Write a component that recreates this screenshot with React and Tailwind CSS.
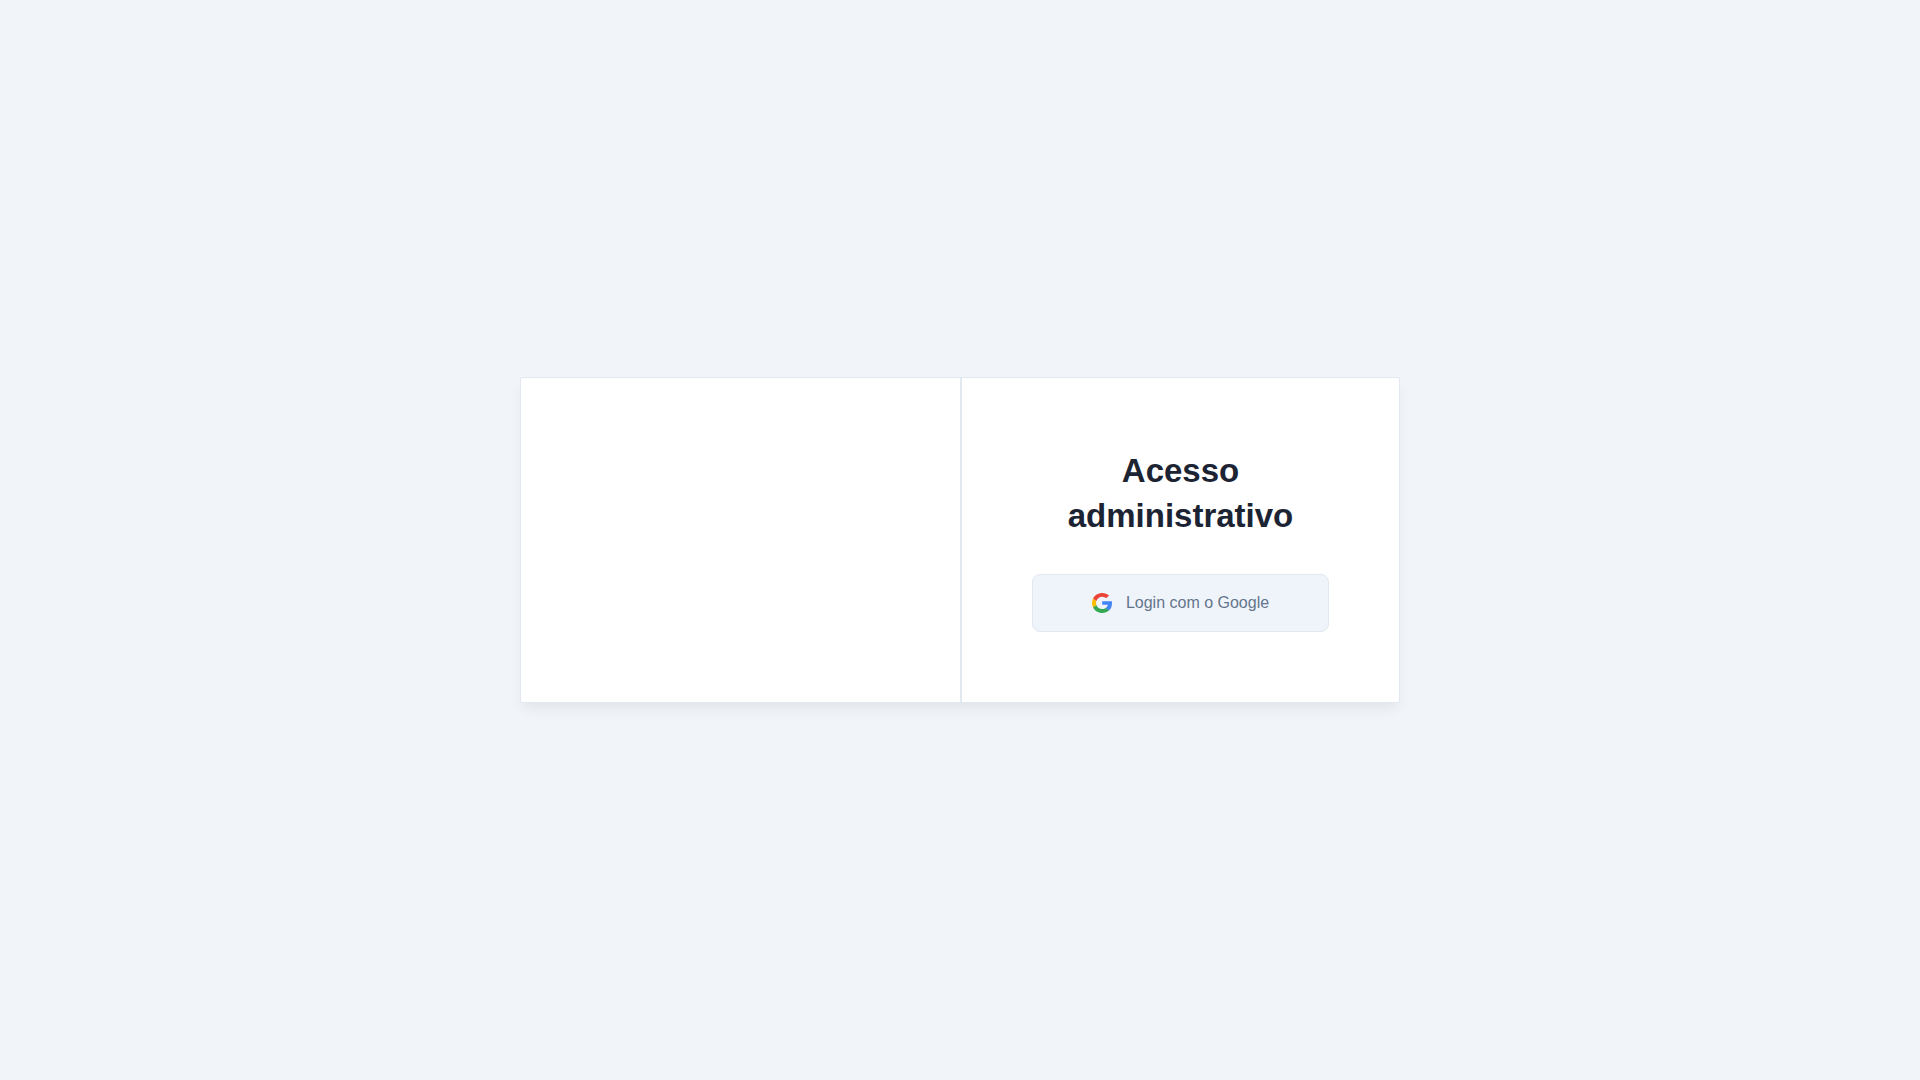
import React from 'react';

const GoogleIcon = () => (
    <svg className="w-5 h-5" viewBox="0 0 20 20" fill="none" aria-hidden="true">
        <path
            d="M19.9895 10.1871C19.9895 9.36767 19.9214 8.76973 19.7742 8.14966H10.1992V11.848H15.8195C15.7062 12.7671 15.0943 14.1512 13.7346 15.0813L13.7155 15.2051L16.7429 17.4969L16.9527 17.5174C18.879 15.7789 19.9895 13.221 19.9895 10.1871Z"
            fill="#4285F4"
        />
        <path
            d="M10.1993 19.9313C12.9527 19.9313 15.2643 19.0454 16.9527 17.5174L13.7346 15.0813C12.8734 15.6682 11.7176 16.0779 10.1993 16.0779C7.50243 16.0779 5.21352 14.3395 4.39759 11.9366L4.27799 11.9466L1.13003 14.3273L1.08887 14.4391C2.76588 17.6945 6.21061 19.9313 10.1993 19.9313Z"
            fill="#34A853"
        />
        <path
            d="M4.39748 11.9366C4.18219 11.3166 4.05759 10.6521 4.05759 9.96565C4.05759 9.27909 4.18219 8.61473 4.38615 7.99466L4.38045 7.8626L1.19304 5.44366L1.08875 5.49214C0.397576 6.84305 0.000976562 8.36008 0.000976562 9.96565C0.000976562 11.5712 0.397576 13.0882 1.08875 14.4391L4.39748 11.9366Z"
            fill="#FBBC05"
        />
        <path
            d="M10.1993 3.85336C12.1142 3.85336 13.406 4.66168 14.1425 5.33717L17.0207 2.59107C15.253 0.985496 12.9527 0 10.1993 0C6.2106 0 2.76588 2.23672 1.08887 5.49214L4.38626 7.99466C5.21352 5.59183 7.50242 3.85336 10.1993 3.85336Z"
            fill="#EB4335"
        />
    </svg>
);

const App = () => {
    return (
        <div className="min-h-screen bg-[#f1f5f9] flex items-center justify-center font-['Liberation_Sans',Arial,sans-serif]">
            <main className="w-full max-w-[880px] rounded-xs border border-[#e2e8f0] bg-white shadow-[0px_8px_13px_-3px_rgba(0,0,0,0.07)]">
                <div className="flex flex-wrap items-stretch">
                    <div className="hidden w-1/2 xl:block" />
                    <div className="w-full xl:w-1/2 xl:border-l-2 border-[#e2e8f0] p-[70px]">
                        <h1 className="mb-9 text-center text-[33px] leading-[45px] font-bold text-[#1c2434]">
                            Acesso administrativo
                        </h1>
                        <button
                            type="button"
                            className="flex w-full items-center justify-center gap-3.5 rounded-lg border border-[#e2e8f0] bg-[#eff4fb] p-4 text-base text-[#64748b] hover:bg-[#e6edf7]"
                        >
                            <GoogleIcon />
                            Login com o Google
                        </button>
                    </div>
                </div>
            </main>
        </div>
    );
};

export default App;
